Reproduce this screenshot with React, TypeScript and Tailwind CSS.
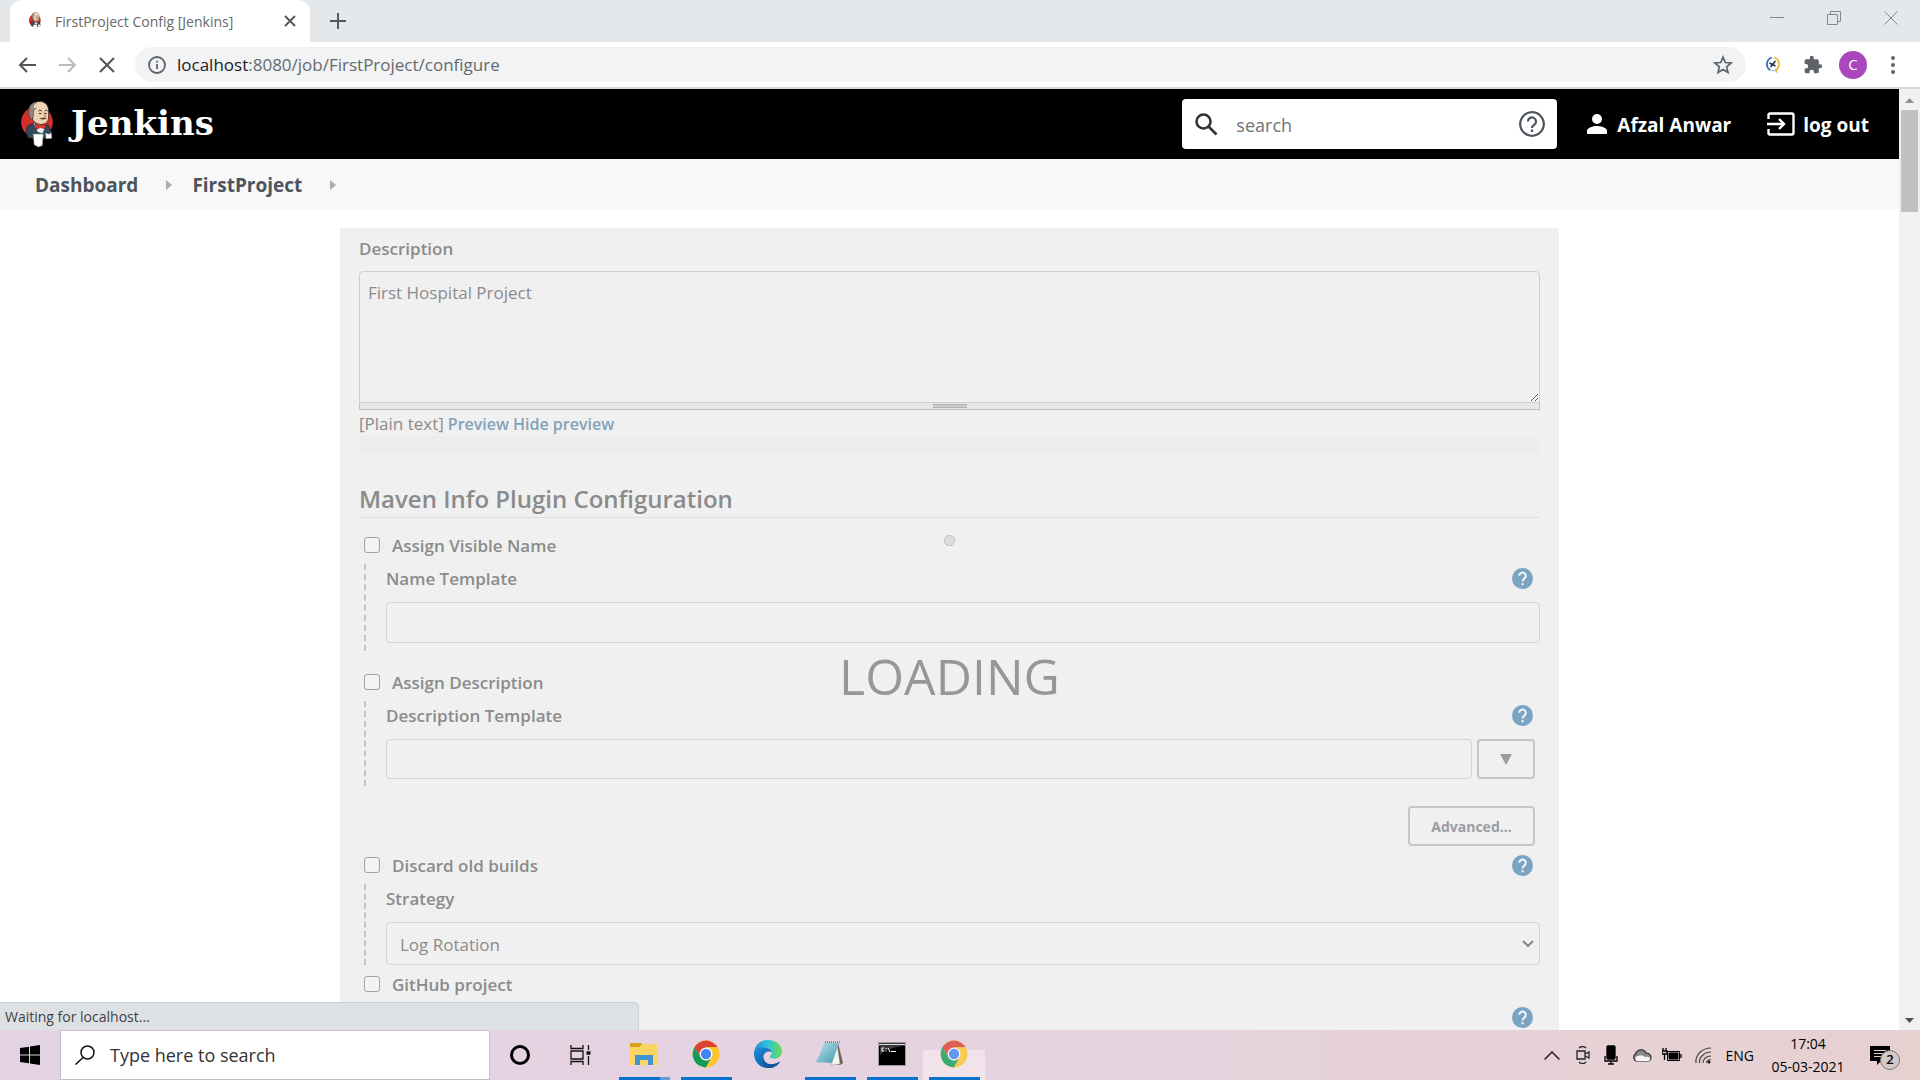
import type { ReactNode } from "react";

function Butler({ className }: { className?: string }) {
  return (
    <svg viewBox="0 0 36 50" className={className} aria-hidden="true">
      <circle cx="17.500" cy="23" r="16.500" fill="#d3302c" />
      <path d="M8 27l6-3 7 3 8-1 3 6 1 4-6 4-10 1-9-2c-2-4-2-9 0-12z" fill="#2f4b5c" stroke="#15232c" strokeWidth=".8" />
      <path d="M14 24l4 9 5 2 4-8z" fill="#e8eef2" />
      <path d="M11 9c1-5 5-8 10-7.500 6 .5 8.500 5 8.500 9.500 0 5 .5 7-.5 10s-4 5-8 4.500-8-3-8.500-7C10 17 10 12 11 9z" fill="#eed3b3" stroke="#33241c" strokeWidth=".8" />
      <path d="M17 2c-5 .5-8 4-8 8-1 5 1 9 3.500 11l1.500-6c-1-3 0-5 2-6z" fill="#8e8580" stroke="#3c302b" strokeWidth=".6" />
      <path d="M17.500 2.500c-2 1-3.500 3-3.500 6l3-1z" fill="#f3dec5" />
      <path d="M19 11.500c1-1 2.500-1 3.500 0M25.500 11.500c1-1 2-1 3 0M19.500 14h2.500M25.500 14h2" fill="none" stroke="#2e211b" strokeWidth="1" />
      <path d="M24.500 13l2 4.500-2 .5" fill="none" stroke="#9b6e55" strokeWidth=".9" />
      <path d="M20 19.500c2-1.500 6-1.500 8 0-2 1-6 1-8 0z" fill="#57463e" />
      <path d="M15.500 24l5 2.500 5.500-2 .5 6-5.500-2-4.500 2.500z" fill="#e2332f" stroke="#6d1512" strokeWidth=".6" />
      <path d="M13.500 35.500h10.500l-1 12-4 1.500-4.500-2.500z" fill="#fff" stroke="#8a8a8a" strokeWidth=".6" />
      <path d="M26 34l3.500 1.500 3-1.500.5 6-6 .5z" fill="#fff" stroke="#555" strokeWidth=".6" />
    </svg>
  );
}

function HelpIcon({ label }: { label: string }) {
  return (
    <button type="button" aria-label={label} className="size-[21px]">
      <svg viewBox="2 2 20 20" className="size-full">
        <circle cx="12" cy="12" r="10" fill="#7aa5c2" />
        <path d="M8.900 9.400a3.100 3.100 0 1 1 5 2.500c-1.200.9-1.900 1.400-1.900 3" fill="none" stroke="#f4f8fb" strokeWidth="1.900" />
        <rect x="11" y="16.400" width="2" height="2" fill="#f4f8fb" />
      </svg>
    </button>
  );
}

function CheckRow({ id, label, help }: { id: string; label: string; help?: boolean }) {
  return (
    <div className="flex h-[38px] items-center pr-[7px]">
      <input
        id={id}
        type="checkbox"
        className="ml-[5px] size-4 appearance-none rounded-[3px] border border-[#a2a2a2] bg-[#f3f3f3]"
      />
      <label htmlFor={id} className="ml-3 flex-1 pt-[2px] text-[17px] font-semibold">
        {label}
      </label>
      {help && <HelpIcon label={"Help for " + label} />}
    </div>
  );
}

function Nested({ id, label, help, children }: { id: string; label: string; help?: boolean; children: ReactNode }) {
  return (
    <div className="ml-[5px] border-l-2 border-dashed border-[#c4c4c4] pl-5">
      <div className="flex h-7 items-center justify-between pr-[7px]">
        <label htmlFor={id} className="pt-[2px] text-[17px] font-semibold">
          {label}
        </label>
        {help && <HelpIcon label={"Help for " + label} />}
      </div>
      {children}
    </div>
  );
}

function Chrome({ className }: { className?: string }) {
  return (
    <svg viewBox="0 0 48 48" className={className} aria-hidden="true">
      <circle cx="24" cy="24" r="23" fill="#fbc72e" />
      <path d="M24 24L4.100 12.500A23 23 0 0 1 43.900 12.500H24z" fill="#db4437" />
      <path d="M4.100 12.500L14 29.700 24 13z" fill="#db4437" />
      <path d="M4.100 12.500L14.500 29.500a11 11 0 0 0 19 0L24 47A23 23 0 0 1 4.100 12.500z" fill="#0f9d58" />
      <path d="M43.900 12.500H24l9.500 17L24 47A23 23 0 0 0 43.900 12.500z" fill="#fbc72e" />
      <circle cx="24" cy="24" r="11" fill="#fff" />
      <circle cx="24" cy="24" r="8.800" fill="#4285f4" />
    </svg>
  );
}

function TaskButton({ label, bar, className, children }: { label: string; bar?: string; className?: string; children: ReactNode }) {
  return (
    <button aria-label={label} className={"flex h-full w-[62px] flex-col items-center " + (className ?? "")}>
      <span className="flex flex-1 items-center">{children}</span>
      <span className={"h-[3px] w-[51px] " + (bar ?? "")} />
    </button>
  );
}

function BrowserTop() {
  return (
    <header className="shrink-0">
      <div className="flex h-[42px] bg-[#e5e8ea] pl-[10px]">
        <div className="flex w-[300px] items-center rounded-t-xl bg-white pl-[18px] pr-[10px]">
          <Butler className="h-[18px] w-[14px]" />
          <span className="ml-[13px] flex-1 text-[14px] text-[#66696d]">FirstProject Config [Jenkins]</span>
          <button aria-label="Close tab" className="p-1 text-[#505357]">
            <svg viewBox="0 0 12 12" className="size-3">
              <path d="M1 1l10 10M11 1L1 11" stroke="currentColor" strokeWidth="1.800" />
            </svg>
          </button>
        </div>
        <button aria-label="New tab" className="ml-5 text-[#55585c]">
          <svg viewBox="0 0 16 16" className="size-4">
            <path d="M8 0v16M0 8h16" stroke="currentColor" strokeWidth="2" />
          </svg>
        </button>
        <div className="ml-auto mb-[6px] flex items-center gap-[43px] pr-[22px] text-[#85888b]">
          <button aria-label="Minimize">
            <svg viewBox="0 0 14 14" className="size-[14px]"><path d="M0 6.500h14" stroke="currentColor" /></svg>
          </button>
          <button aria-label="Restore">
            <svg viewBox="0 0 14 14" className="size-[14px]" fill="none" stroke="currentColor">
              <path d="M.5 3.500h10v10H.5zM3.500 3V.5h10v10h-3" />
            </svg>
          </button>
          <button aria-label="Close window">
            <svg viewBox="0 0 14 14" className="size-[14px]"><path d="M.5.5l13 13M13.500.5l-13 13" stroke="currentColor" /></svg>
          </button>
        </div>
      </div>
      <div className="flex h-[47px] items-center border-b-2 border-[#d6d8da] bg-white pl-[18px] pr-[25px]">
        <button aria-label="Back" className="text-[#505357]">
          <svg viewBox="0 0 18 16" className="h-4 w-[18px]" fill="none" stroke="currentColor" strokeWidth="2"><path d="M18 8H2M9 1L2 8l7 7" /></svg>
        </button>
        <button aria-label="Forward" className="ml-[23px] text-[#b9bcbe]">
          <svg viewBox="0 0 18 16" className="h-4 w-[18px]" fill="none" stroke="currentColor" strokeWidth="2"><path d="M0 8h16M9 1l7 7-7 7" /></svg>
        </button>
        <button aria-label="Stop" className="ml-[22px] text-[#505357]">
          <svg viewBox="0 0 16 16" className="size-4" stroke="currentColor" strokeWidth="2"><path d="M1 1l14 14M15 1L1 15" /></svg>
        </button>
        <div className="ml-5 flex h-[35px] flex-1 items-center rounded-full bg-[#f1f3f4] pl-[13px] pr-[13px]">
          <svg viewBox="0 0 18 18" className="size-[18px] text-[#5f6368]" fill="none" stroke="currentColor" strokeWidth="1.800">
            <circle cx="9" cy="9" r="8" />
            <path d="M9 8v5M9 4.800v1.800" />
          </svg>
          <span className="ml-[11px] flex-1 text-[17px] text-[#66696d]">
            <span className="text-[#202124]">localhost</span>:8080/job/FirstProject/configure
          </span>
          <button aria-label="Bookmark this tab">
            <svg viewBox="0 0 24 24" className="size-5 text-[#5f6368]" fill="none" stroke="currentColor" strokeWidth="2">
              <path d="M12 2.500l2.700 6.500 7 .6-5.300 4.600 1.600 6.800-6-3.600-6 3.600 1.600-6.800L2.300 9.600l7-.6z" />
            </svg>
          </button>
        </div>
        <button aria-label="Extension" className="ml-[19px]">
          <svg viewBox="0 0 16 17" className="h-[18px] w-4" fill="none">
            <path d="M7 1a7 7 0 0 0-2 12.500" stroke="#2f6fc0" strokeWidth="1.800" />
            <path d="M9 1a7 7 0 0 1 2 12.500l1 2.500" stroke="#f0b73c" strokeWidth="1.800" />
            <path d="M5 13.500c2 1 4 1 6 0" stroke="#9fc3e8" strokeWidth="1.300" />
            <path d="M4.500 6.500l6 3M10.500 4.500L5.500 10.500" stroke="#1c2f4d" strokeWidth="1.500" />
          </svg>
        </button>
        <button aria-label="Extensions" className="ml-[22px] text-[#5f6368]">
          <svg viewBox="0 0 24 24" className="size-5" fill="currentColor">
            <path d="M20.500 11H19V7a2 2 0 0 0-2-2h-4V3.500a2.500 2.500 0 0 0-5 0V5H4a2 2 0 0 0-2 2v3.800h1.500a2.700 2.700 0 0 1 0 5.400H2V20a2 2 0 0 0 2 2h3.800v-1.500a2.700 2.700 0 0 1 5.400 0V22H17a2 2 0 0 0 2-2v-4h1.500a2.500 2.500 0 0 0 0-5z" />
          </svg>
        </button>
        <button aria-label="Profile" className="ml-4 size-7 rounded-full bg-[#ab47bc] text-[15px] text-white">C</button>
        <button aria-label="Menu" className="ml-6 flex flex-col gap-[3px]">
          <span className="size-1 rounded-full bg-[#5f6368]" />
          <span className="size-1 rounded-full bg-[#5f6368]" />
          <span className="size-1 rounded-full bg-[#5f6368]" />
        </button>
      </div>
    </header>
  );
}

function JenkinsHeader() {
  return (
    <div className="flex h-[70px] items-center bg-black pl-5 pr-[30px] text-white">
      <a href="#home" className="flex items-center">
        <Butler className="h-[48px] w-[35px]" />
        <span className="ml-4 pb-[2px] font-['DejaVu_Serif',serif] text-[34px] leading-none font-bold">Jenkins</span>
      </a>
      <div className="ml-auto flex h-[50px] w-[375px] items-center rounded-[4px] bg-white pl-[13px] pr-3">
        <svg viewBox="0 0 23 23" className="size-[23px] text-[#333]" fill="none" stroke="currentColor" strokeWidth="2.600">
          <circle cx="8.500" cy="8.500" r="7" />
          <path d="M13.500 13.500l8 8" />
        </svg>
        <input
          aria-label="Search"
          placeholder="search"
          className="ml-[18px] min-w-0 flex-1 pt-[2px] text-[18px] text-[#333] outline-none placeholder:text-[#737373]"
        />
        <button aria-label="Search help" className="text-[#4d545d]">
          <svg viewBox="0 0 26 26" className="size-[26px]" fill="none" stroke="currentColor" strokeWidth="2.200">
            <circle cx="13" cy="13" r="11.800" />
            <path d="M9 10.500a4 4 0 1 1 6.300 3.200C13.800 14.800 13 15.500 13 17M13 18.500v2.500" />
          </svg>
        </button>
      </div>
      <a href="#user" className="ml-[30px] flex items-center text-[19px] font-bold">
        <svg viewBox="0 0 20 20" className="mr-[10px] size-5" fill="currentColor">
          <circle cx="10" cy="5" r="5" />
          <path d="M0 20v-3c0-3.300 6-5 10-5s10 1.700 10 5v3z" />
        </svg>
        <span className="pt-[2px]">Afzal Anwar</span>
      </a>
      <a href="#logout" className="ml-9 flex items-center text-[19px] font-bold">
        <svg viewBox="0 0 28 24" className="mr-2 h-6 w-7" fill="none" stroke="currentColor" strokeWidth="2.400">
          <path d="M1.500 7V3a1.500 1.500 0 0 1 1.500-1.500h22A1.500 1.500 0 0 1 26.500 3v18a1.500 1.500 0 0 1-1.500 1.500H3A1.500 1.500 0 0 1 1.500 21v-4M0 12h16M12 7l5 5-5 5" />
        </svg>
        <span className="pt-[2px]">log out</span>
      </a>
    </div>
  );
}

function Breadcrumbs() {
  const arrow = (
    <svg viewBox="0 0 6 10" className="h-[10px] w-[6px]" fill="#a9adb1" aria-hidden="true">
      <path d="M0 0l6 5-6 5z" />
    </svg>
  );
  return (
    <nav className="flex h-[50px] items-center bg-[#f8f8f8] pt-[2px] pl-[35px] text-[19px] font-bold text-[#4d545d]">
      <a href="#dashboard">Dashboard</a>
      <span className="ml-7 mr-5">{arrow}</span>
      <a href="#first">FirstProject</a>
      <span className="ml-7">{arrow}</span>
    </nav>
  );
}

function ConfigForm() {
  return (
    <form className="relative mx-[340px] mt-[19px] bg-[#f0f0f0] pl-[19px] pr-[19px] text-[#8b8b8b]">
      <label htmlFor="description" className="flex h-[43px] items-center pb-[2px] text-[17px] font-semibold">
        Description
      </label>
      <textarea
        id="description"
        defaultValue="First Hospital Project"
        className="block h-[132px] w-full rounded-t-[4px] border border-[#cdcfd1] px-2 py-[9px] text-[17px] leading-6"
      />
      <div className="flex h-[7px] items-center justify-center border border-t-0 border-[#bfc2c4] bg-[#e6e7e8]">
        <span className="h-1 w-[34px] border-y border-[#b0b1b1] bg-[#cbcccc]" />
      </div>
      <div className="flex h-[26px] items-center gap-1 pt-px text-[17px]">
        <span>[Plain text]</span>
        <a href="#preview" className="text-[16px] font-semibold text-[#83a2ba]">Preview</a>
        <a href="#hide" className="text-[16px] font-semibold text-[#83a2ba]">Hide preview</a>
      </div>
      <div className="h-[17px] bg-[#ededed]" />
      <h2 className="mt-7 flex h-[37px] items-center border-b border-[#dddfe0] text-[24px] font-semibold">
        Maven Info Plugin Configuration
      </h2>
      <div className="mt-2">
        <CheckRow id="visible" label="Assign Visible Name" />
        <Nested id="name" label="Name Template" help>
          <div className="pt-[10px] pb-2">
            <input id="name" className="block h-[41px] w-full rounded-[4px] border border-[#d2d3d4] px-3" />
          </div>
        </Nested>
      </div>
      <div className="mt-3">
        <CheckRow id="assign" label="Assign Description" />
        <Nested id="desc" label="Description Template" help>
          <div className="flex gap-[5px] pt-[10px] pr-[5px] pb-[7px]">
            <input id="desc" className="h-10 min-w-0 flex-1 rounded-[4px] border border-[#d2d3d4] px-3" />
            <button type="button" aria-label="Expand" className="flex h-10 w-[58px] items-center justify-center rounded-[4px] border-2 border-[#c3c5c6]">
              <svg viewBox="0 0 12 11" className="h-[11px] w-3" fill="#999ca1"><path d="M0 0h12L6 11z" /></svg>
            </button>
          </div>
        </Nested>
      </div>
      <div className="mt-5 flex justify-end pr-[5px]">
        <button type="button" className="h-10 w-[127px] rounded-[4px] border-2 border-[#c3c5c6] text-[14px] font-bold text-[#999ca1]">
          Advanced...
        </button>
      </div>
      <CheckRow id="discard" label="Discard old builds" help />
      <Nested id="strategy" label="Strategy">
        <div className="relative pt-[10px]">
          <select id="strategy" className="block h-[43px] w-full appearance-none rounded-[4px] border border-[#d2d3d4] px-[13px] pt-[2px] text-[17px]">
            <option>Log Rotation</option>
          </select>
          <svg viewBox="0 0 12 8" className="pointer-events-none absolute right-[6px] bottom-[17px] h-2 w-3" fill="none" stroke="#858585" strokeWidth="2">
            <path d="M1 1l5 5 5-5" />
          </svg>
        </div>
      </Nested>
      <CheckRow id="github" label="GitHub project" />
      <div className="flex h-[80px] items-start justify-end pt-1 pr-[7px]">
        <HelpIcon label="Help for GitHub project" />
      </div>
    </form>
  );
}

function Taskbar() {
  return (
    <footer className="flex h-[50px] shrink-0 items-center bg-linear-to-r from-[#e3d2e4] via-[#e6d3e0] to-[#e6d0d0] text-black">
      <button aria-label="Start" className="flex h-full w-[60px] items-center justify-center">
        <svg viewBox="0 0 20 20" className="size-5">
          <path d="M0 3l9-1.300v7.800H0zM10 1.500L20 0v9.500H10zM0 10.500h9v7.800L0 17zM10 10.500h10V20l-10-1.500z" />
        </svg>
      </button>
      <label className="flex h-full w-[430px] items-center border border-[#c9bccb] bg-white pl-[14px]">
        <svg viewBox="0 0 20 20" className="size-5" fill="none" stroke="#111" strokeWidth="1.500">
          <circle cx="12.500" cy="7.500" r="6.500" />
          <path d="M8 12.500L.5 19.500" />
        </svg>
        <input
          aria-label="Type here to search"
          placeholder="Type here to search"
          className="ml-[15px] min-w-0 flex-1 text-[18px] outline-none placeholder:text-[#333]"
        />
      </label>
      <button aria-label="Cortana" className="flex w-[60px] justify-center">
        <span className="size-5 rounded-full border-[3px] border-black" />
      </button>
      <button aria-label="Task view" className="flex w-[60px] justify-center">
        <svg viewBox="0 0 21 20" className="h-5 w-[21px]" fill="none" stroke="#111" strokeWidth="1.300">
          <path d="M1 0v3.500h12V0M1 20v-3.500h12V20M1 6h12v8H1zM18.500 0v5M18.500 11v9" />
          <path d="M16.500 8h4" strokeWidth="3.500" />
        </svg>
      </button>
      <div className="ml-[3px] flex h-full">
        <TaskButton label="File Explorer" bar="border-r-[10px] border-[#5ea0d8] bg-[#0a72cc]">
          <svg viewBox="0 0 28 24" className="h-6 w-7">
            <path d="M0 1h11l2 3h-2L9 6H0z" fill="#dba11c" />
            <path d="M0 5h9l4-3h14v21H0z" fill="#fcd462" />
            <path d="M5 13h18v10h-5v-5h-8v5H5z" fill="#3f94d2" />
          </svg>
        </TaskButton>
        <TaskButton label="Google Chrome" bar="bg-[#0a72cc]"><Chrome className="size-7" /></TaskButton>
        <TaskButton label="Microsoft Edge">
          <svg viewBox="0 0 32 32" className="size-[30px]">
            <defs>
              <linearGradient id="edgeTop" x1="0" x2="1"><stop offset="0" stopColor="#1e8fd8" /><stop offset=".5" stopColor="#2fc3d3" /><stop offset="1" stopColor="#6be04f" /></linearGradient>
              <linearGradient id="edgeLow" x1="0" y1="0" x2="1" y2="1"><stop offset="0" stopColor="#1c8fdc" /><stop offset="1" stopColor="#0c4a92" /></linearGradient>
            </defs>
            <path d="M1 15C2 6 8 1 16 1c9 0 15 6 15 12 0 5-4 8-8 8-3 0-5-1-5-2s2-2 2-4c0-4-4-6-8-6-6 0-10 3-11 6z" fill="url(#edgeTop)" />
            <path d="M1 15c1-4 6-7 11-6 4 0 7 2 8 5-5-2-9 1-9 6 0 7 8 10 18 4-3 5-8 7-13 7C7 31 1 24 1 15z" fill="url(#edgeLow)" />
            <path d="M11 19c0 7 8 11 18 5-3 5-8 7-12 7-5-2-8-7-6-12z" fill="#1256a3" />
          </svg>
        </TaskButton>
        <TaskButton label="Notepad" bar="bg-[#0a72cc]">
          <svg viewBox="0 0 28 26" className="h-[26px] w-7">
            <defs><linearGradient id="pad" x1="0" x2="1" y2="1"><stop offset="0" stopColor="#bfe4ea" /><stop offset="1" stopColor="#3f9aae" /></linearGradient></defs>
            <path d="M22 2l5 20-3 2-6-1z" fill="#6b6252" />
            <path d="M21 3l3 20-9 1z" fill="#f4f4f0" stroke="#999" strokeWidth=".5" />
            <path d="M9 1l14 1-7 20-16-1z" fill="url(#pad)" />
            <path d="M9 1h15" stroke="#777" strokeWidth="1.500" strokeDasharray="1 1" />
          </svg>
        </TaskButton>
        <TaskButton label="Command Prompt" bar="bg-[#0a72cc]">
          <svg viewBox="0 0 28 24" className="h-6 w-7">
            <rect x=".5" y=".5" width="27" height="23" fill="#000" stroke="#9a9a9a" />
            <path d="M1 2.500h26" stroke="#dedede" strokeWidth="1.500" />
            <path d="M2 4h22C14 6 6 8 2 13z" fill="#3b3b3b" />
            <path d="M6 6H4v3h2M8 6v1M8 8.500v1M10 6l2 4M13 9.500h5" fill="none" stroke="#fff" />
          </svg>
        </TaskButton>
        <TaskButton label="Chrome window" bar="bg-[#0a72cc]" className="bg-[linear-gradient(transparent_20px,#f0e4ea_20px)]"><Chrome className="size-7 opacity-80" /></TaskButton>
      </div>
      <div className="ml-auto flex h-full items-center pr-5">
        <button aria-label="Show hidden icons">
          <svg viewBox="0 0 16 9" className="h-[9px] w-4" fill="none" stroke="#222" strokeWidth="1.500"><path d="M.5 8.500L8 1l7.500 7.500" /></svg>
        </button>
        <svg viewBox="0 0 14 18" className="ml-4 h-[18px] w-[14px]" fill="none" stroke="#222" strokeWidth="1.300">
          <path d="M1 5h8v8H1zM9 8l4-2v6l-4-2M3 2c2-2 5-2 7 0M3 16c2 2 5 2 7 0" />
        </svg>
        <svg viewBox="0 0 14 20" className="ml-[14px] h-5 w-[14px]" fill="none" stroke="#000" strokeWidth="1.300">
          <rect x="3" y="1" width="8" height="13" rx="1" fill="#000" />
          <path d="M1 11v5h12v-5M7 16v3M4 19h6" />
        </svg>
        <svg viewBox="0 0 20 14" className="ml-[14px] h-[14px] w-5" stroke="#222" strokeWidth="1.100">
          <path d="M4 13a4 4 0 0 1-.5-7C5 1 12 0 14 5c4 0 5 3 5 4.500S18 13 16 13z" fill="#8a8a8a" />
          <path d="M5 13c-3-1-2-5 1-5 3-2 6 0 7 1 4-1 6 1 5 3-1 1-2 1-3 1z" fill="#f5f5f5" stroke="none" />
        </svg>
        <svg viewBox="0 0 20 14" className="ml-[10px] h-[14px] w-5" stroke="#000" fill="none">
          <path d="M5.500 3.500h12v9h-12z" />
          <path d="M7 5h9v6H7z" fill="#000" />
          <path d="M19 6v4M1 0v3M4 0v3M0 3h5v3H0zM2.500 6v6" strokeWidth="1.300" />
        </svg>
        <svg viewBox="0 0 18 18" className="ml-3 h-[18px] w-[18px]" fill="none" stroke="#444" strokeWidth="1.200">
          <path d="M2 17C1 9 8 2 17 2M5.500 17c-.5-6 5-11 11.500-11M9 17c0-4 3.500-7 8-7M12.500 17c0-2 2-3.500 4.500-3.500" />
          <circle cx="15" cy="16" r="1.500" fill="#111" stroke="none" />
        </svg>
        <span className="ml-[14px] text-[14px]">ENG</span>
        <div className="ml-4 w-[76px] text-center text-[14px] leading-[23px] whitespace-nowrap">
          <div>17:04</div>
          <div>05-03-2021</div>
        </div>
        <button aria-label="Notifications" className="relative ml-6 h-[30px] w-[30px]">
          <svg viewBox="0 0 20 20" className="size-5">
            <path d="M0 1h20v15h-9l-4 4v-4H0z" />
            <path d="M4 5.500h12M4 8.500h12M4 11.500h8" stroke="#e6d0d0" />
          </svg>
          <span className="absolute right-0 bottom-0 flex size-5 items-center justify-center rounded-full border border-[#777] bg-[#d5c8c8] text-[13px] font-semibold">2</span>
        </button>
      </div>
    </footer>
  );
}

export default function App() {
  return (
    <div className="flex h-screen flex-col overflow-hidden bg-white font-['Open_Sans',sans-serif]">
      <BrowserTop />
      <div className="relative flex min-h-0 flex-1">
        <main className="relative min-w-0 flex-1 overflow-hidden">
          <JenkinsHeader />
          <Breadcrumbs />
          <ConfigForm />
          <div className="pointer-events-none absolute inset-x-0 top-[446px] flex flex-col items-center text-[#979797]">
            <span className="size-[11px] rounded-full border border-dotted border-[#a5a5a5] bg-[#dcdcdc]" />
            <span className="mt-[95px] text-[50px] leading-[70px]">LOADING</span>
          </div>
        </main>
        <div className="flex w-[21px] flex-col items-center bg-[#f1f1f1] pt-[9px] pb-[7px]">
          <svg viewBox="0 0 9 5" className="h-[5px] w-[9px]" fill="#8f8f8f"><path d="M0 5l4.500-5L9 5z" /></svg>
          <div className="mt-[7px] h-[102px] w-[17px] bg-[#c1c1c1]" />
          <svg viewBox="0 0 9 5" className="mt-auto h-[5px] w-[9px]" fill="#505050"><path d="M0 0l4.500 5L9 0z" /></svg>
        </div>
        <div role="status" className="absolute bottom-0 left-0 flex h-[28px] w-[639px] items-center rounded-tr-[5px] border-t border-r border-[#cdd1d4] bg-[#dee1e4] pl-[5px] text-[14px] text-[#3e4144]">
          Waiting for localhost...
        </div>
      </div>
      <Taskbar />
    </div>
  );
}
